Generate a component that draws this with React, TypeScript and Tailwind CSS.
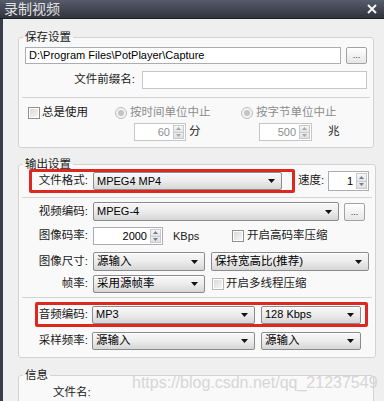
import React from 'react';

const Arrow = () => (
  <svg width="7" height="4" viewBox="0 0 7 4" className="shrink-0">
    <path d="M0 0H7L3.5 4Z" fill="#111" />
  </svg>
);

const Select = ({ text, className = '', latin = false }: { text: string; className?: string; latin?: boolean }) => (
  <div
    className={`flex shrink-0 items-center justify-between rounded-[2px] border border-[#8a8b8c] bg-linear-to-b from-[#f8f8f8] via-[#ececec] to-[#d6d6d6] pl-[3px] pr-[6px] shadow-[inset_0_1px_0_#ffffff] ${className}`}
  >
    <span className={`whitespace-nowrap leading-none text-black ${latin ? 'text-[11px]' : 'text-[11.5px]'}`}>{text}</span>
    <Arrow />
  </div>
);

const Dots = ({ className = '' }: { className?: string }) => (
  <div
    className={`flex shrink-0 items-end justify-center rounded-[2px] border border-[#a3a3a3] bg-linear-to-b from-[#ffffff] to-[#e6e6e6] pb-[3px] text-[9px] leading-none text-[#333] ${className}`}
  >
    ...
  </div>
);

const Tri = ({ up, color }: { up?: boolean; color: string }) => (
  <svg width="5" height="3" viewBox="0 0 5 3">
    <path d={up ? 'M0 3H5L2.5 0Z' : 'M0 0H5L2.5 3Z'} fill={color} />
  </svg>
);

const Spin = ({ value, className = '', disabled = false }: { value: string; className?: string; disabled?: boolean }) => (
  <div
    className={`flex shrink-0 border bg-white ${disabled ? 'border-[#c6c6c6] text-[#8e8e8e]' : 'border-[#abadb3] text-black'} ${className}`}
  >
    <div className="flex flex-1 items-center justify-end pr-[3px] text-[11px] leading-none">{value}</div>
    <div className="my-[1px] mr-[1px] flex w-[11px] flex-col border border-[#c9c9c9]">
      <div className="flex flex-1 items-center justify-center border-b border-[#c9c9c9] bg-linear-to-b from-[#f7f7f7] to-[#e4e4e4]">
        <Tri up color={disabled ? '#a9a9a9' : '#6e7f95'} />
      </div>
      <div className="flex flex-1 items-center justify-center bg-linear-to-b from-[#f0f0f0] to-[#dedede]">
        <Tri color={disabled ? '#a9a9a9' : '#6e7f95'} />
      </div>
    </div>
  </div>
);

const Check = ({ faded = false }: { faded?: boolean }) => (
  <div
    className={`h-[12px] w-[12px] shrink-0 border ${faded ? 'border-[#b9b9b9]' : 'border-[#8f8f8f]'} bg-white p-[1px]`}
  >
    <div className="h-full w-full bg-linear-to-br from-[#d9d9d9] to-[#f7f7f7]" />
  </div>
);

const Radio = () => (
  <div className="flex h-[12px] w-[12px] shrink-0 items-center justify-center rounded-full border border-[#bdbdbd] bg-[#f4f4f4]">
    <div className="h-[6px] w-[6px] rounded-full bg-[#c4c4c4]" />
  </div>
);

const Label = ({ text, className = '' }: { text: string; className?: string }) => (
  <div className={`flex shrink-0 justify-end whitespace-nowrap leading-none ${className}`}>{text}</div>
);

const Group = ({ title, className = '', children }: { title: string; className?: string; children?: React.ReactNode }) => (
  <fieldset className={`w-[356px] rounded-[3px] border border-[#d2d2d2] bg-[#f9f9f9] px-[6px] ${className}`}>
    <legend className="-ml-[2px] px-[2px] text-[11.5px] leading-[16px] text-[#1a1a1a]">{title}</legend>
    {children}
  </fieldset>
);

const Sep = ({ className = '' }: { className?: string }) => (
  <div className={`-mx-[3px] border-t border-[#d4d4d4] ${className}`} />
);

export default function App() {
  return (
    <div className="relative h-[401px] w-[384px] overflow-hidden bg-[#efefef] font-['Liberation_Sans','Noto_Sans_CJK_SC',sans-serif] text-[11.5px] text-[#1a1a1a]">
      {/* title bar */}
      <div className="flex h-[19px] items-center justify-between border-b border-[#1d1f26] bg-linear-to-b from-[#575c6b] to-[#30343f] pl-[4px] pr-[7px]">
        <span className="text-[14px] leading-none text-[#e2e2e2]">录制视频</span>
        <svg width="10" height="10" viewBox="0 0 10 10">
          <path d="M1 1L9 9M9 1L1 9" stroke="#f4f4f4" strokeWidth="2" />
        </svg>
      </div>

      <div className="flex h-[382px] border-l-[3px] border-[#3a3e4a]">
        <div className="flex-1 pl-[15px] pt-[10px]">
          {/* 保存设置 */}
          <Group title="保存设置" className="pb-[6px]">
            <div className="mt-[2px] flex h-[17px]">
              <div className="flex flex-1 items-center border border-[#abadb3] bg-white pl-[3px] text-[11px] leading-none text-black">
                {'D:\\Program Files\\PotPlayer\\Capture'}
              </div>
              <Dots className="ml-[5px] w-[21px]" />
            </div>
            <div className="mt-[7px] flex h-[18px] items-center">
              <Label text="文件前缀名:" className="w-[110px]" />
              <div className="ml-[7px] h-full flex-1 border border-[#c5c7cc] bg-white" />
            </div>
            <Sep className="mt-[8px]" />
            <div className="mt-[7px] flex h-[15px] items-center whitespace-nowrap">
              <div className="flex w-[90px] shrink-0 items-center gap-[2px] pl-[3px]">
                <Check />
                <span className="leading-none">总是使用</span>
              </div>
              <div className="flex w-[126px] shrink-0 items-center gap-[3px]">
                <Radio />
                <span className="leading-none text-[#8c8c8c]">按时间单位中止</span>
              </div>
              <div className="flex items-center gap-[3px]">
                <Radio />
                <span className="leading-none text-[#8c8c8c]">按字节单位中止</span>
              </div>
            </div>
            <div className="mt-[3px] flex h-[18px] items-center whitespace-nowrap">
              <div className="w-[90px] shrink-0" />
              <div className="flex w-[126px] shrink-0 items-center">
                <Spin value="60" disabled className="ml-[19px] h-[18px] w-[52px]" />
                <span className="ml-[3px] leading-none">分</span>
              </div>
              <div className="flex items-center">
                <Spin value="500" disabled className="ml-[18px] h-[18px] w-[53px]" />
                <span className="ml-[16px] leading-none">兆</span>
              </div>
            </div>
          </Group>

          {/* 输出设置 */}
          <Group title="输出设置" className="mt-[8px] pb-[7px]">
            <div className="-mt-[3px] flex h-[24px] items-center whitespace-nowrap">
              <div className="ml-[4px] flex h-full w-[266px] shrink-0 items-center rounded-[2px] border-[3px] border-[#dc2820]">
                <Label text="文件格式:" className="w-[56px]" />
                <Select text="MPEG4 MP4" latin className="ml-[5px] mr-[10px] h-[18px] flex-1 shrink" />
              </div>
              <span className="ml-[3px] shrink-0 leading-none">速度:</span>
              <Spin value="1" className="ml-[4px] h-[20px] w-[41px]" />
            </div>
            <Sep className="mt-[4px]" />
            <div className="mt-[4px] flex h-[19px] items-center">
              <Label text="视频编码:" className="w-[63px]" />
              <Select text="MPEG-4" latin className="ml-[5px] h-full w-[246px]" />
              <Dots className="ml-[5px] h-[18px] w-[21px]" />
            </div>
            <div className="mt-[6px] flex h-[18px] items-center whitespace-nowrap">
              <Label text="图像码率:" className="w-[63px]" />
              <Spin value="2000" className="ml-[5px] h-full w-[70px]" />
              <div className="w-[69px] shrink-0 pl-[10px] text-[11px] leading-none">KBps</div>
              <Check />
              <span className="ml-[3px] leading-none">开启高码率压缩</span>
            </div>
            <div className="mt-[7px] flex h-[19px] items-center">
              <Label text="图像尺寸:" className="w-[63px]" />
              <Select text="源输入" className="ml-[5px] h-full w-[112px]" />
              <Select text="保持宽高比(推荐)" className="ml-[6px] h-full flex-1 shrink" />
            </div>
            <div className="mt-[4px] flex h-[18px] items-center whitespace-nowrap">
              <Label text="帧率:" className="w-[63px]" />
              <Select text="采用源帧率" className="ml-[5px] h-full w-[112px]" />
              <div className="ml-[7px]">
                <Check faded />
              </div>
              <span className="ml-[2px] leading-none">开启多线程压缩</span>
            </div>
            <Sep className="mt-[4px]" />
            <div className="mt-[4px] flex h-[25px]">
              <div className="ml-[10px] flex h-full w-[333px] shrink-0 items-center rounded-[2px] border-[3px] border-[#dc2820]">
                <Label text="音频编码:" className="w-[50px]" />
                <Select text="MP3" latin className="ml-[4px] h-[18px] w-[163px]" />
                <Select text="128 Kbps" latin className="ml-[6px] h-[18px] w-[100px]" />
              </div>
            </div>
            <div className="mt-[5px] flex h-[18px] items-center">
              <Label text="采样频率:" className="w-[63px]" />
              <Select text="源输入" className="ml-[4px] h-full w-[163px]" />
              <Select text="源输入" className="ml-[6px] h-full w-[100px]" />
            </div>
          </Group>

          {/* 信息 */}
          <Group title="信息" className="mt-[9px] h-[60px]">
            <div className="ml-[28px] mt-[4px] leading-none">文件名:</div>
          </Group>
        </div>
      </div>

      {/* watermark */}
      <div className="pointer-events-none absolute left-[132px] top-[375px] text-[16px] leading-none text-[#d6d6d6]">
        https://blog.csdn.net/qq_21237549
      </div>
    </div>
  );
}
